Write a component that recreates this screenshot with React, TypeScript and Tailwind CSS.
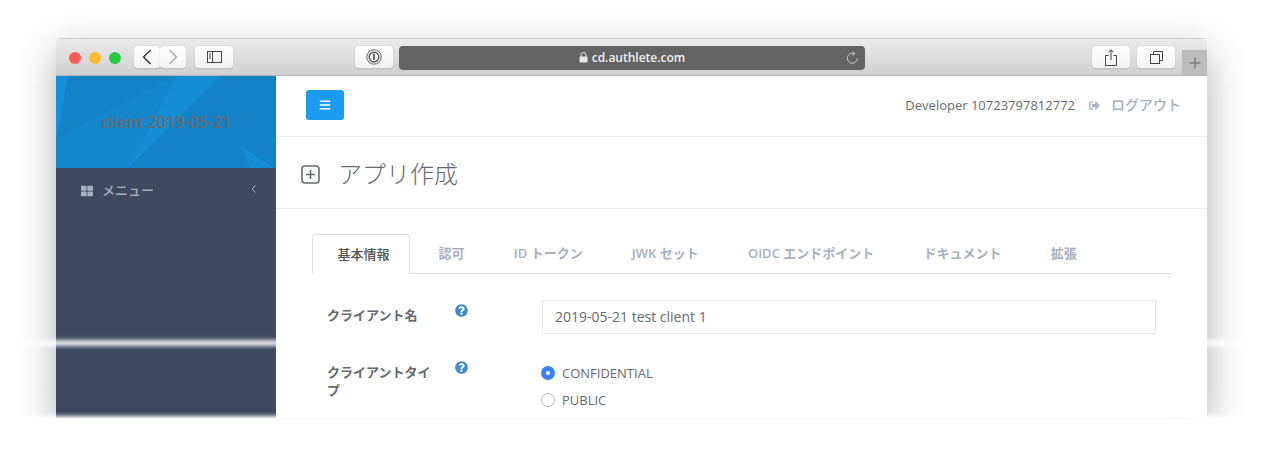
import { FaBars, FaQuestionCircle, FaSignOutAlt, FaThLarge } from "react-icons/fa";

const LATIN = "font-['Open_Sans','Noto_Sans_CJK_JP',sans-serif]";

const TABS = ["認可", "ID トークン", "JWK セット", "OIDC エンドポイント", "ドキュメント", "拡張"];

function ToolButton({ className, children }: { className: string; children: React.ReactNode }) {
  return (
    <div
      className={`flex h-[23px] items-center justify-center rounded-[4px] border-b border-[#c4c4c4] bg-gradient-to-b from-white to-[#f4f4f4] shadow-[0_0_1px_rgba(0,0,0,0.35)] ${className}`}
    >
      {children}
    </div>
  );
}

function Toolbar() {
  return (
    <div className="relative flex h-[38px] shrink-0 items-center border-y border-t-[#cfcfcf] border-b-[#b4b4b4] bg-gradient-to-b from-[#ebebeb] to-[#d0d0d0] pt-[1px] pl-[13px]">
      <div className="flex gap-2">
        <span className="size-3 rounded-full bg-[#fc5b57]" />
        <span className="size-3 rounded-full bg-[#fdbb2e]" />
        <span className="size-3 rounded-full bg-[#28c840]" />
      </div>
      <ToolButton className="ml-[13px] w-[26px]">
        <svg width="10" height="16" viewBox="0 0 10 16" fill="none" stroke="#333" strokeWidth="1.4">
          <path d="M8.5 1 L1.5 8 L8.5 15" />
        </svg>
      </ToolButton>
      <ToolButton className="w-[26px]">
        <svg width="10" height="16" viewBox="0 0 10 16" fill="none" stroke="#aaa" strokeWidth="1.4">
          <path d="M1.5 1 L8.5 8 L1.5 15" />
        </svg>
      </ToolButton>
      <ToolButton className="ml-[9px] w-[38px]">
        <svg width="15" height="12" viewBox="0 0 15 12" fill="none" stroke="#444" strokeWidth="1">
          <rect x="0.5" y="0.5" width="14" height="11" />
          <path d="M5.5 0.5 V11.5 M2 3 H4 M2 5 H4 M2 7 H4" />
        </svg>
      </ToolButton>
      <ToolButton className="ml-[122px] w-[38px]">
        <svg width="16" height="16" viewBox="0 0 16 16" fill="none" stroke="#555">
          <circle cx="8" cy="8" r="7.2" strokeWidth="0.9" />
          <circle cx="8" cy="8" r="4.8" strokeWidth="1.4" />
          <path d="M8 4.8 V11" strokeWidth="1.8" />
        </svg>
      </ToolButton>
      <div className="relative ml-[6px] flex h-6 w-[466px] items-center justify-center rounded-[4px] bg-[#636363]">
        <svg width="9" height="11" viewBox="0 0 9 11" className="mr-[4px]" fill="#e8e8e8">
          <rect x="0.5" y="4.5" width="8" height="6" rx="1" />
          <path d="M2 5 V3 a2.5 2.5 0 0 1 5 0 V5" fill="none" stroke="#e8e8e8" strokeWidth="1" />
        </svg>
        <span className={`${LATIN} text-[12px] font-semibold text-[#f2f2f2]`}>cd.authlete.com</span>
        <svg width="13" height="14" viewBox="0 0 13 14" fill="none" stroke="#c8c8c8" strokeWidth="1" className="absolute right-[6px] top-[5px]">
          <path d="M8 2.6 A5 5 0 1 0 11.3 7" />
          <path d="M6.5 0.5 L9 2.7 L6.5 4.9" />
        </svg>
      </div>
      <ToolButton className="ml-[227px] w-[38px]">
        <svg width="12" height="17" viewBox="0 0 12 17" fill="none" stroke="#444" strokeWidth="1">
          <path d="M3.5 6.5 H0.5 V16.5 H11.5 V6.5 H8.5 M6 11 V1 M3.5 3.2 L6 0.8 L8.5 3.2" />
        </svg>
      </ToolButton>
      <ToolButton className="ml-[7px] w-[38px]">
        <svg width="13" height="13" viewBox="0 0 13 13" fill="none" stroke="#444" strokeWidth="1">
          <rect x="0.5" y="3.5" width="9" height="9" />
          <path d="M3.5 3.5 V0.5 H12.5 V9.5 H9.5" />
        </svg>
      </ToolButton>
      <div className="absolute bottom-0 right-0 flex h-[25px] w-[25px] items-center justify-center bg-[#bcbcbc]">
        <svg width="12" height="12" viewBox="0 0 12 12" stroke="#666" strokeWidth="1">
          <path d="M6 0.5 V11.5 M0.5 6 H11.5" />
        </svg>
      </div>
    </div>
  );
}

function Sidebar() {
  return (
    <aside className="flex w-[220px] shrink-0 flex-col bg-[#3e495f]">
      <div className="relative flex h-[92px] items-center justify-center overflow-hidden bg-[#1382c6]">
        <svg className="absolute inset-0" width="220" height="92" viewBox="0 0 220 92">
          <path d="M0 0 H12 L0 68 Z" fill="#158fd8" />
          <path d="M0 92 V62 L118 0 H165 L72 92 Z" fill="#1486cb" />
          <path d="M121 0 H164 L72 92 Z" fill="#158dd5" />
          <path d="M184 69 L217 92 H194 Z" fill="#158dd5" />
        </svg>
        <span className={`${LATIN} relative text-[16px] font-semibold text-[#676a6c]`}>client 2019-05-21</span>
      </div>
      <div className="flex h-[46px] items-center pl-[25px] pr-[20px] text-[#a7b1c2]">
        <FaThLarge className="size-[12px]" />
        <span className={`${LATIN} ml-[9px] text-[13px] font-medium`}>メニュー</span>
        <svg width="5" height="8" viewBox="0 0 5 8" fill="none" stroke="#a7b1c2" className="ml-auto -mt-[4px]">
          <path d="M4.5 0.5 L1 4 L4.5 7.5" />
        </svg>
      </div>
    </aside>
  );
}

function Tabs() {
  return (
    <div className="flex h-[40px] border-b border-[#dedede]">
      <div className={`${LATIN} flex h-[40px] w-[98px] items-center justify-center rounded-t-[4px] border border-b-0 border-[#dedede] bg-white pl-[5px] text-[13px] font-medium text-[#555]`}>
        基本情報
      </div>
      <div className="flex pl-[4px]">
        {TABS.map((t) => (
          <div key={t} className={`${LATIN} flex items-center px-[24.6px] text-[13px] font-semibold text-[#a7b1c2]`}>
            {t}
          </div>
        ))}
      </div>
    </div>
  );
}

function Form() {
  return (
    <div className={`${LATIN} text-[#676a6c]`}>
      <div className="mt-[26px] flex">
        <label className="w-[125px] pt-[6px] pl-[15px] text-[13px] leading-[18px] font-semibold">クライアント名</label>
        <div className="w-[105px] pl-[18px] pt-[4px] text-[#428bca]">
          <FaQuestionCircle className="size-[13px]" />
        </div>
        <div className="flex h-[34px] w-[614px] items-center border border-[#e5e6e7] px-[12px] pb-[2px] text-[14px]">
          2019-05-21 test client 1
        </div>
      </div>
      <div className="mt-[26px] flex">
        <label className="w-[125px] pt-[3px] pl-[15px] text-[13px] leading-[18px] font-semibold">クライアントタイプ</label>
        <div className="w-[105px] pl-[18px] pt-[1px] text-[#428bca]">
          <FaQuestionCircle className="size-[13px]" />
        </div>
        <div className="-ml-[1px] flex flex-col gap-[13px] pt-[6px] text-[13px] leading-[14px]">
          <div className="flex items-center gap-[7px]">
            <span className="flex size-[14px] items-center justify-center rounded-full bg-[#3b82f6]">
              <span className="size-[4px] rounded-full bg-white" />
            </span>
            CONFIDENTIAL
          </div>
          <div className="flex items-center gap-[7px]">
            <span className="size-[14px] rounded-full border border-[#b5b5b5] bg-white" />
            PUBLIC
          </div>
        </div>
      </div>
    </div>
  );
}

export default function App() {
  return (
    <div className="relative h-[449px] w-[1263px] overflow-hidden bg-white">
      <div className="ml-[56px] mt-[38px] flex h-[380px] w-[1151px] flex-col overflow-hidden rounded-t-[5px] shadow-[0_14px_40px_rgba(0,0,0,0.3)]">
        <Toolbar />
        <div className="flex min-h-0 flex-1">
          <Sidebar />
          <main className="flex-1 bg-white">
            <div className="flex h-[61px] items-center justify-between border-b border-[#e7eaec] pb-[2px] pl-[30px] pr-[26px]">
              <div className="flex h-[30px] w-[38px] items-center justify-center rounded-[3px] bg-[#1c9cf1] text-white">
                <FaBars className="size-[12px]" />
              </div>
              <div className={`${LATIN} flex items-center text-[13px] text-[#676a6c]`}>
                <span className="pt-[1px]">Developer 10723797812772</span>
                <FaSignOutAlt className="ml-[14px] size-[11px] text-[#a7b1c2]" />
                <span className="ml-[11px] -mt-[2px] text-[14px] font-medium text-[#a7b1c2]">ログアウト</span>
              </div>
            </div>
            <div className="flex h-[72px] items-center border-b border-[#e7eaec] pl-[25px] pt-[3px]">
              <svg width="19" height="19" viewBox="0 0 19 19" fill="none" stroke="#676a6c" strokeWidth="1.6">
                <rect x="1" y="1" width="17" height="17" rx="3" />
                <path d="M9.5 5 V14 M5 9.5 H14" />
              </svg>
              <h1 className={`${LATIN} ml-[18px] text-[24px] font-light text-[#676a6c]`}>アプリ作成</h1>
            </div>
            <div className="px-[36px] pt-[25px]">
              <Tabs />
              <Form />
            </div>
          </main>
        </div>
      </div>
      {/* torn strip across the window */}
      <div className="absolute inset-x-0 top-[340px] h-[6px] bg-white/90 blur-[2px]" />
      <div className="absolute inset-x-0 top-[416px] h-[60px] bg-white blur-[2px]" />
    </div>
  );
}
